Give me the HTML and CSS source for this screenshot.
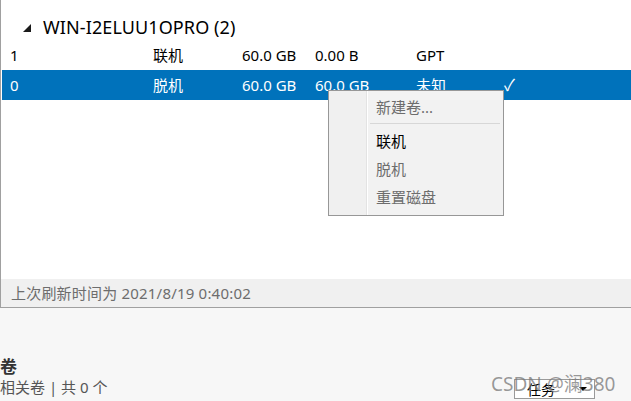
FILE: index.html
```html
<!DOCTYPE html>
<html>
<head>
<meta charset="utf-8">
<link rel="stylesheet" href="styles.css">
</head>
<body>
<div class="panel">
  <div class="list">
    <div class="group">
      <span class="tri"></span>
      <span class="gname">WIN-I2ELUU1OPRO (2)</span>
    </div>
    <div class="row">
      <span>1</span><span>联机</span><span>60.0 GB</span><span>0.00 B</span><span>GPT</span><span></span>
    </div>
    <div class="row sel">
      <span>0</span><span>脱机</span><span>60.0 GB</span><span>60.0 GB</span><span>未知</span><span class="chk">✓</span>
    </div>
  </div>
  <div class="status">上次刷新时间为 2021/8/19 0:40:02</div>
</div>
<div class="lower">
  <div class="vtitle">卷</div>
  <div class="vsub">相关卷 | 共 0 个</div>
  <div class="taskbtn"><span>任务</span><span class="arrow"></span></div>
  <div class="wm">CSDN @澜380</div>
</div>
<div class="menu">
  <div class="mi dis">新建卷...</div>
  <div class="sep"></div>
  <div class="mi">联机</div>
  <div class="mi dis">脱机</div>
  <div class="mi dis">重置磁盘</div>
</div>
</body>
</html>
```
FILE: styles.css
```css
html, body {
  margin: 0;
  padding: 0;
}
body {
  width: 631px;
  height: 401px;
  overflow: hidden;
  background: #f7f7f7;
  font-family: "Noto Sans", "Noto Sans CJK SC", sans-serif;
  font-size: 15px;
  color: #000;
  position: relative;
}
.panel {
  border-left: 1px solid #a0a0a0;
  border-bottom: 1px solid #a0a0a0;
  height: 307px;
  display: flex;
  flex-direction: column;
}
.list {
  background: #fff;
  height: 279px;
  padding-left: 1px;
  padding-top: 13px;
  box-sizing: border-box;
}
.group {
  height: 28px;
  display: flex;
  align-items: center;
  padding-left: 21px;
}
.tri {
  width: 0;
  height: 0;
  border-left: 8px solid transparent;
  border-bottom: 8px solid #1a1a1a;
  margin-right: 12px;
  margin-top: 2px;
}
.gname {
  font-size: 18px;
  color: #000;
  letter-spacing: 0.1px;
}
.row {
  display: grid;
  grid-template-columns: 143px 89px 73px 101px 88px 40px;
  height: 29px;
  align-items: center;
  padding-left: 8px;
  line-height: 29px;
  white-space: nowrap;
}
.row.sel {
  background: #0072bb;
  color: #fff;
  height: 30px;
}
.chk {
  font-size: 16px;
}
.status {
  flex: 1;
  background: #f0f0f0;
  color: #6d6d6d;
  padding-left: 10px;
  line-height: 28px;
  letter-spacing: 0.2px;
}
.lower {
  position: relative;
  height: 93px;
}
.vtitle {
  position: absolute;
  left: 0;
  top: 49px;
  line-height: 20px;
  font-weight: bold;
  font-size: 17px;
  color: #333;
}
.vsub {
  position: absolute;
  left: 0;
  top: 69px;
  line-height: 20px;
  color: #555;
  font-size: 15px;
}
.taskbtn {
  position: absolute;
  left: 514px;
  top: 71px;
  width: 81px;
  height: 20px;
  border: 1px solid #9a9a9a;
  background: #fff;
  display: flex;
  align-items: center;
  padding-left: 12px;
  box-sizing: border-box;
  font-size: 14px;
  gap: 24px;
}
.arrow {
  width: 0;
  height: 0;
  border-left: 4px solid transparent;
  border-right: 4px solid transparent;
  border-top: 4px solid #000;
}
.wm {
  position: absolute;
  left: 491px;
  top: 61px;
  font-size: 19px;
  color: rgba(120, 120, 120, 0.75);
  white-space: nowrap;
}
.menu {
  position: absolute;
  left: 328px;
  top: 90px;
  width: 176px;
  height: 126px;
  box-sizing: border-box;
  border: 1px solid #979797;
  background: linear-gradient(to right, #f0f0f0 0, #f0f0f0 37px, #e3e3e3 37px, #e3e3e3 38px, #fff 38px, #fff 39px, #f2f2f2 39px);
  padding-top: 2px;
}
.mi {
  height: 28px;
  line-height: 28px;
  padding-left: 47px;
  color: #000;
}
.mi.dis {
  color: #6d6d6d;
}
.sep {
  height: 1px;
  background: #d7d7d7;
  margin: 2px 3px 3px 41px;
}
```
